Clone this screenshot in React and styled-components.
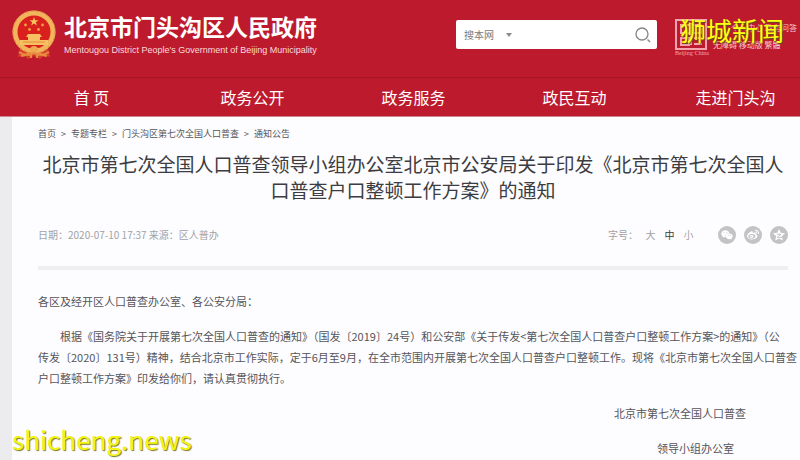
import { useState } from 'react';
import styled, { createGlobalStyle } from 'styled-components';
import { FaWeixin, FaWeibo } from 'react-icons/fa';

const navItems = ['首 页', '政务公开', '政务服务', '政民互动', '走进门头沟'];
const crumbs = ['首页', '专题专栏', '门头沟区第七次全国人口普查', '通知公告'];
const sizes = ['大', '中', '小'];

const Emblem = () => (
	<svg width='46' height='50' viewBox='0 0 46 50' aria-hidden='true'>
		<path
			d='M9 38 L37 38 L39 47 L33 45 L29 49 L23 46 L17 49 L13 45 L7 47 Z'
			fill='#d8402c'
		/>
		<circle cx='23' cy='22' r='19' fill='#d9201c' />
		<circle
			cx='23'
			cy='22'
			r='19'
			fill='none'
			stroke='#f2b45c'
			strokeWidth='5'
		/>
		<circle
			cx='23'
			cy='22'
			r='21'
			fill='none'
			stroke='#e08a3c'
			strokeWidth='1'
			strokeDasharray='3 2'
		/>
		<path
			d='M23 7l1.1 3.2h3.4l-2.7 2 1 3.2-2.8-2-2.8 2 1-3.2-2.7-2h3.4z'
			fill='#f8c35c'
		/>
		<g fill='#f3a04c'>
			<circle cx='14.5' cy='15' r='1.4' />
			<circle cx='31.5' cy='15' r='1.4' />
			<circle cx='18.5' cy='19.5' r='1.4' />
			<circle cx='27.5' cy='19.5' r='1.4' />
		</g>
		<path
			d='M17 24h12l2 3h-2v3h8v5H9v-5h8v-3h-2z'
			fill='#f7c063'
		/>
		<path d='M12 32h22' stroke='#e58b3c' strokeWidth='1' />
		<circle cx='23' cy='40' r='4' fill='#f0a850' />
		<path
			d='M8 42q7 5 15 1q8 4 15-1M10 46q6-1 8-3M36 46q-6-1-8-3M20 44v4M26 44v4'
			fill='none'
			stroke='#e88c40'
			strokeWidth='2'
		/>
	</svg>
);

const SealLogo = () => (
	<svg width='32' height='31' viewBox='0 0 32 31' aria-hidden='true'>
		<g fill='none' stroke='#f4a3ae' strokeWidth='2'>
			<rect x='1' y='1' width='30' height='29' />
			<path d='M6 6h20v8H6zM16 4v22M6 19h8v7H6zM19 19h8M19 25h8' />
		</g>
	</svg>
);

const Magnifier = () => (
	<svg width='16' height='16' viewBox='0 0 16 16' aria-hidden='true'>
		<circle
			cx='7'
			cy='7'
			r='6'
			fill='none'
			stroke='#85858a'
			strokeWidth='1.3'
		/>
		<path d='M12.5 12.5L15 15' stroke='#85858a' strokeWidth='1.4' />
	</svg>
);

const QzoneStar = () => (
	<svg width='14' height='14' viewBox='0 0 14 14' aria-hidden='true'>
		<path
			d='M7 1l1.8 3.8 4.2.5-3.1 2.9.9 4.2L7 10.4l-3.8 2 .9-4.2L1 5.3l4.2-.5z'
			fill='#fff'
		/>
		<path
			d='M4.8 6.2h4.3L5.3 9.2q2.4.6 5 0'
			fill='none'
			stroke='#c3c2c4'
			strokeWidth='1'
		/>
	</svg>
);

const App = () => {
	const [keyword, setKeyword] = useState('');
	const [size, setSize] = useState('中');

	const submitHandler = (e) => {
		e.preventDefault();
	};

	return (
		<Page>
			<GlobalStyle />
			<Header>
				<TopBar>
					<Brand>
						<Emblem />
						<div>
							<SiteName>北京市门头沟区人民政府</SiteName>
							<SiteNameEn>
								Mentougou District People's Government of Beijing Municipality
							</SiteNameEn>
						</div>
					</Brand>
					<SearchForm onSubmit={submitHandler}>
						<ScopeSelect aria-label='搜索范围'>
							<option>搜本网</option>
						</ScopeSelect>
						<Caret />
						<SearchInput
							type='text'
							aria-label='搜索'
							value={keyword}
							onChange={(e) => setKeyword(e.target.value)}
						/>
						<SearchButton type='submit' aria-label='搜索'>
							<Magnifier />
						</SearchButton>
					</SearchForm>
					<Tools>
						<Seal>
							<SealLogo />
							<SealText>Beijing·China</SealText>
						</Seal>
						<ToolLinks>
							<ToolRow $end>
								<a href='#center'>个人中心</a> <a href='#faq'>政务问答</a>
							</ToolRow>
							<ToolRow>
								<a href='#access'>无障碍</a> <a href='#mobile'>移动版</a>{' '}
								<a href='#trad'>繁體</a>
							</ToolRow>
						</ToolLinks>
						<TopWatermark>狮城新闻</TopWatermark>
					</Tools>
				</TopBar>
				<Nav>
					{navItems.map((item) => (
						<NavLink key={item} href='#nav'>
							{item}
						</NavLink>
					))}
				</Nav>
			</Header>
			<Article>
				<Breadcrumb>
					{crumbs.map((crumb, i) => (
						<span key={crumb}>
							{i > 0 && <Separator>&gt;</Separator>}
							<a href='#crumb'>{crumb}</a>
						</span>
					))}
				</Breadcrumb>
				<Title>
					北京市第七次全国人口普查领导小组办公室北京市公安局关于印发《北京市第七次全国人口普查户口整顿工作方案》的通知
				</Title>
				<Meta>
					<span>日期：2020-07-10 17:37 来源：区人普办</span>
					<MetaRight>
						<SizeLabel>字号：</SizeLabel>
						{sizes.map((s) => (
							<SizeButton
								key={s}
								type='button'
								$active={s === size}
								onClick={() => setSize(s)}
							>
								{s}
							</SizeButton>
						))}
						<Share>
							<ShareButton type='button' aria-label='微信'>
								<FaWeixin size={12} />
							</ShareButton>
							<ShareButton type='button' aria-label='微博'>
								<FaWeibo size={12} />
							</ShareButton>
							<ShareButton type='button' aria-label='QQ空间'>
								<QzoneStar />
							</ShareButton>
						</Share>
					</MetaRight>
				</Meta>
				<Divider />
				<Body>
					<Paragraph>各区及经开区人口普查办公室、各公安分局：</Paragraph>
					<Paragraph $indent>
						根据《国务院关于开展第七次全国人口普查的通知》（国发〔2019〕24号）和公安部《关于传发&lt;第七次全国人口普查户口整顿工作方案&gt;的通知》（公
						<br />
						传发〔2020〕131号）精神，结合北京市工作实际，定于6月至9月，在全市范围内开展第七次全国人口普查户口整顿工作。现将《北京市第七次全国人口普查
						<br />
						户口整顿工作方案》印发给你们，请认真贯彻执行。
					</Paragraph>
					<Signature>北京市第七次全国人口普查</Signature>
					<Signature $inset>领导小组办公室</Signature>
				</Body>
			</Article>
			<BottomWatermark>shicheng.news</BottomWatermark>
		</Page>
	);
};

const GlobalStyle = createGlobalStyle`
	* {
		box-sizing: border-box;
	}

	body {
		margin: 0;
		background: #ecebee;
		font-family: 'Noto Sans CJK SC', sans-serif;
	}

	a {
		color: inherit;
		text-decoration: none;
	}

	button,
	input,
	select {
		margin: 0;
		padding: 0;
		border: none;
		background: none;
		color: inherit;
		font: inherit;
	}
`;

const Page = styled.div`
	position: relative;
	display: flex;
	flex-direction: column;
	min-height: 100vh;
	overflow: hidden;
`;

const Header = styled.header`
	background: #be1a2d;
	color: #fff;
	border-bottom: 1px solid #c9898f;
`;

const TopBar = styled.div`
	display: flex;
	align-items: flex-start;
	height: 78px;
	padding: 10px 3px 0 11px;
	border-bottom: 1px solid #a81427;
`;

const Brand = styled.div`
	display: flex;
	gap: 7px;
	flex: 1;
`;

const SiteName = styled.div`
	margin: 1px 0 2px;
	font-size: 23px;
	font-weight: 700;
	line-height: 30px;
	white-space: nowrap;
`;

const SiteNameEn = styled.div`
	color: #fadadd;
	font-family: 'Liberation Sans', sans-serif;
	font-size: 9px;
	line-height: 14px;
	white-space: nowrap;
`;

const SearchForm = styled.form`
	display: flex;
	align-items: center;
	width: 201px;
	height: 29px;
	margin-top: 10px;
	padding: 0 6px 0 8px;
	background: #fff;
	border-radius: 2px;
	color: #77777c;
	font-size: 10px;
`;

const ScopeSelect = styled.select`
	width: 42px;
	appearance: none;
	outline: none;
`;

const Caret = styled.span`
	border: 3px solid transparent;
	border-top: 4px solid #8a8a90;
	border-bottom: none;
`;

const SearchInput = styled.input`
	flex: 1;
	min-width: 0;
	outline: none;
`;

const SearchButton = styled.button`
	display: flex;
`;

const Tools = styled.div`
	position: relative;
	display: flex;
	gap: 6px;
	margin: 9px 0 0 18px;
`;

const Seal = styled.div`
	display: flex;
	flex-direction: column;
	width: 32px;
`;

const SealText = styled.span`
	color: #f4a3ae;
	font-family: 'Liberation Serif', serif;
	font-size: 6px;
	line-height: 6px;
	white-space: nowrap;
`;

const ToolLinks = styled.div`
	width: 84px;
	color: #f6c9ce;
	font-size: 8px;
	line-height: 17px;
	white-space: nowrap;
`;

const ToolRow = styled.div`
	text-align: ${(props) => (props.$end ? 'right' : 'left')};
`;

const Nav = styled.nav`
	display: grid;
	grid-template-columns: repeat(5, 1fr);
	margin: 0 -16px 0 11px;
`;

const NavLink = styled.a`
	font-size: 16px;
	line-height: 38px;
	text-align: center;
`;

const Article = styled.main`
	flex: 1;
	margin-left: 12px;
	padding: 9px 12px 0 26px;
	background: #fdfcfe;
	color: #55555a;
`;

const Breadcrumb = styled.div`
	font-size: 9px;
	line-height: 16px;
`;

const Separator = styled.span`
	margin: 0 5px;
`;

const Title = styled.h1`
	margin: 9px 0 0;
	color: #3c3c41;
	font-size: 19px;
	font-weight: 400;
	line-height: 26px;
	text-align: center;
`;

const Meta = styled.div`
	display: flex;
	align-items: center;
	justify-content: space-between;
	margin-top: 23px;
	color: #a2a2a6;
	font-size: 10px;
	line-height: 18px;
`;

const MetaRight = styled.div`
	display: flex;
	align-items: center;
`;

const SizeLabel = styled.span`
	margin-right: 3px;
`;

const SizeButton = styled.button`
	width: 19px;
	color: ${(props) => (props.$active ? '#3c3c41' : '#a2a2a6')};
`;

const Share = styled.div`
	display: flex;
	gap: 8px;
	margin-left: 20px;
`;

const ShareButton = styled.button`
	display: flex;
	align-items: center;
	justify-content: center;
	width: 18px;
	height: 18px;
	border-radius: 50%;
	background: #c3c2c4;
	color: #fff;
`;

const Divider = styled.hr`
	height: 4px;
	margin: 22px 0 21px;
	border: none;
	background: #efeef0;
`;

const Body = styled.div`
	display: flex;
	flex-direction: column;
	gap: 14px;
`;

const Paragraph = styled.p`
	margin: 0;
	font-size: 11px;
	line-height: 21px;
	text-indent: ${(props) => (props.$indent ? '2em' : '0')};
	white-space: nowrap;
`;

const Signature = styled(Paragraph)`
	margin-right: ${(props) => (props.$inset ? '54px' : '42px')};
	text-align: right;
`;

const TopWatermark = styled.div`
	position: absolute;
	top: -6px;
	left: 5px;
	color: #ffff14;
	font-size: 26px;
	line-height: 34px;
	text-shadow: 1px 1px 1px #55551a;
	white-space: nowrap;
`;

const BottomWatermark = styled.div`
	position: absolute;
	bottom: 4px;
	left: 12px;
	color: #f4f414;
	font-size: 26px;
	line-height: 34px;
	text-shadow: 1px 1px 1px #77771a;
`;

export default App;
